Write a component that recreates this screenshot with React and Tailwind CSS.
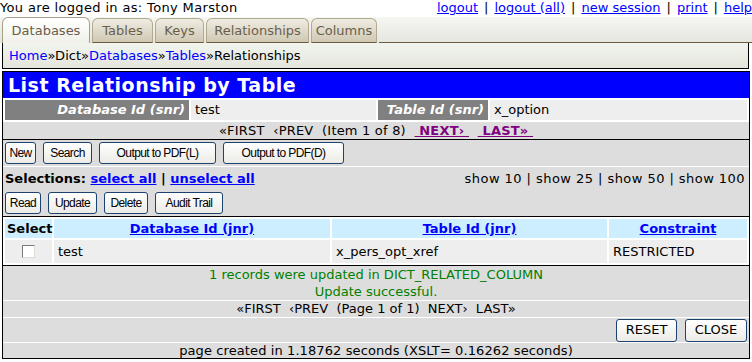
import React from 'react'

const tabs = [
  { name: 'Databases', w: 'w-[88px]' },
  { name: 'Tables', w: 'w-[61px]' },
  { name: 'Keys', w: 'w-[49px]' },
  { name: 'Relationships', w: 'w-[103px]' },
  { name: 'Columns', w: 'w-[66px]' },
]

function Btn({ label, className = '' }) {
  return (
    <button
      className={
        "h-[22px] rounded-[3px] border border-[#1c4370] bg-gradient-to-b from-white to-[#ecebe6] font-['Liberation_Sans',sans-serif] text-[12px] tracking-[-0.6px] text-black " +
        className
      }
    >
      {label}
    </button>
  )
}

function Btn2({ label, className = '' }) {
  return (
    <button
      className={
        'h-[23px] rounded-[3px] border border-[#1c4370] bg-gradient-to-b from-white to-[#ecebe6] text-[13px] text-black ' +
        className
      }
    >
      {label}
    </button>
  )
}

export default function App() {
  return (
    <div className="w-[752px] h-[362px] overflow-hidden bg-white font-['DejaVu_Sans',sans-serif] text-[13px] text-black">
      {/* top line */}
      <div className="flex h-[16px] items-center justify-between whitespace-nowrap leading-[16px]">
        <div className="tracking-[0.35px]">You are logged in as: Tony Marston</div>
        <div className="flex gap-[6px]">
          <a className="text-[#0000ff] underline">logout</a>
          <span>|</span>
          <a className="text-[#0000ff] underline">logout (all)</a>
          <span>|</span>
          <a className="text-[#0000ff] underline">new session</a>
          <span>|</span>
          <a className="text-[#0000ff] underline">print</a>
          <span>|</span>
          <a className="text-[#0000ff] underline">help</a>
        </div>
      </div>

      {/* tabs */}
      <div className="mt-[1px] flex h-[26px] items-end bg-gradient-to-b from-[#f6f7f3] to-[#e4e5dd] pl-[2px]">
        {tabs.map((t, i) => (
          <div
            key={t.name}
            className={
              i === 0
                ? 'mr-[2px] flex h-[26px] items-center justify-center rounded-t-[6px] border border-b-0 border-[#a89f88] bg-gradient-to-b from-white to-[#f1f1ea] text-[#6b5e4b] ' + t.w
                : 'mr-[2px] flex h-[25px] items-center justify-center rounded-t-[6px] border border-[#b2a98f] border-b-[#6b5a40] bg-gradient-to-b from-[#efece2] to-[#cfc8b3] text-[#6b5e4b] ' + t.w
            }
          >
            {t.name}
          </div>
        ))}
        <div className="h-[1px] flex-1 self-end bg-[#6b5a40]" />
      </div>

      {/* breadcrumbs */}
      <div className="ml-[2px] flex h-[26px] w-[747px] items-center border border-t-0 border-black bg-gradient-to-b from-[#f2f4ef] to-[#e4e6dd] px-[6px] text-black">
        <a className="text-[#0000ff]">Home</a>»Dict»<a className="text-[#0000ff]">Databases</a>»
        <a className="text-[#0000ff]">Tables</a>»Relationships
      </div>

      {/* main box */}
      <div className="ml-[2px] mt-[2px] w-[748px] border border-black">
        <div className="flex h-[26px] items-center bg-[#0000ff] px-[5px] text-[19px] font-bold tracking-[0.5px] text-white">
          List Relationship by Table
        </div>

        <div className="mt-[2px] flex gap-[2px] px-[2px]">
          <div className="flex h-[20px] w-[184px] items-center justify-end bg-[#808080] px-[4px] font-bold italic text-white">
            Database Id (snr)
          </div>
          <div className="flex h-[20px] w-[185px] items-center bg-[#eeeeee] px-[4px]">test</div>
          <div className="flex h-[20px] w-[110px] items-center justify-end bg-[#808080] px-[4px] font-bold italic text-white">
            Table Id (snr)
          </div>
          <div className="flex h-[20px] flex-1 items-center bg-[#eeeeee] px-[4px]">x_option</div>
        </div>

        <div className="mt-[2px] flex h-[17px] items-center justify-center whitespace-pre bg-[#dddddd] tracking-[0.2px]">
          <span>«FIRST  ‹PREV  (Item 1 of 8)  </span>
          <a className="font-bold text-[#800080] underline">{' NEXT› '}</a>
          <span>  </span>
          <a className="font-bold text-[#800080] underline">{' LAST» '}</a>
        </div>

        <div className="border-t border-black bg-[#dddddd]">
          <div className="flex h-[26px] items-center gap-[7px] px-[2px]">
            <Btn label="New" className="w-[31px]" />
            <Btn label="Search" className="w-[49px]" />
            <Btn label="Output to PDF(L)" className="w-[117px]" />
            <Btn label="Output to PDF(D)" className="w-[121px]" />
          </div>
          <div className="flex h-[24px] items-center justify-between border-t border-white px-[2px]">
            <div className="font-bold">
              Selections: <a className="text-[#0000ff] underline">select all</a> |{' '}
              <a className="text-[#0000ff] underline">unselect all</a>
            </div>
            <div className="pr-[2px] tracking-[0.45px]">show 10 | show 25 | show 50 | show 100</div>
          </div>
          <div className="flex h-[26px] items-center gap-[7px] px-[2px]">
            <Btn label="Read" className="w-[36px]" />
            <Btn label="Update" className="w-[49px]" />
            <Btn label="Delete" className="w-[44px]" />
            <Btn label="Audit Trail" className="w-[68px]" />
          </div>
        </div>

        <div className="border-t border-black">
          <div className="mt-[2px] flex gap-[2px] px-[2px] font-bold">
            <div className="flex h-[19px] w-[47px] items-center bg-[#cceeff] px-[2px]">Select</div>
            <div className="flex h-[19px] w-[276px] items-center justify-center bg-[#cceeff] text-[#0000ff] underline">
              Database Id (jnr)
            </div>
            <div className="flex h-[19px] w-[275px] items-center justify-center bg-[#cceeff] text-[#0000ff] underline">
              Table Id (jnr)
            </div>
            <div className="flex h-[19px] flex-1 items-center justify-center bg-[#cceeff] text-[#0000ff] underline">
              Constraint
            </div>
          </div>
          <div className="mb-[2px] mt-[2px] flex gap-[2px] px-[2px]">
            <div className="flex h-[23px] w-[47px] items-center justify-center bg-[#eeeeee]">
              <span className="block h-[13px] w-[13px] border border-[#7a7a7a] border-b-[#dcdcd4] border-r-[#dcdcd4] bg-white" />
            </div>
            <div className="flex h-[23px] w-[276px] items-center bg-[#eeeeee] px-[4px]">test</div>
            <div className="flex h-[23px] w-[275px] items-center bg-[#eeeeee] px-[4px]">x_pers_opt_xref</div>
            <div className="flex h-[23px] flex-1 items-center bg-[#eeeeee] px-[4px]">RESTRICTED</div>
          </div>
        </div>

        <div className="border-t border-black bg-[#dddddd]">
          <div className="flex h-[34px] flex-col items-center justify-center leading-[17px] text-[#008000]">
            <div>1 records were updated in DICT_RELATED_COLUMN</div>
            <div>Update successful.</div>
          </div>
          <div className="flex h-[17px] items-center justify-center whitespace-pre border-t border-white">
            «FIRST  ‹PREV  (Page 1 of 1)  NEXT›  LAST»
          </div>
          <div className="flex h-[25px] items-center justify-end gap-[8px] border-t border-white pr-[2px]">
            <Btn2 label="RESET" className="w-[61px]" />
            <Btn2 label="CLOSE" className="w-[62px]" />
          </div>
          <div className="flex h-[16px] items-center justify-center border-t border-white tracking-[0.1px]">
            page created in 1.18762 seconds (XSLT= 0.16262 seconds)
          </div>
        </div>
      </div>
    </div>
  )
}
